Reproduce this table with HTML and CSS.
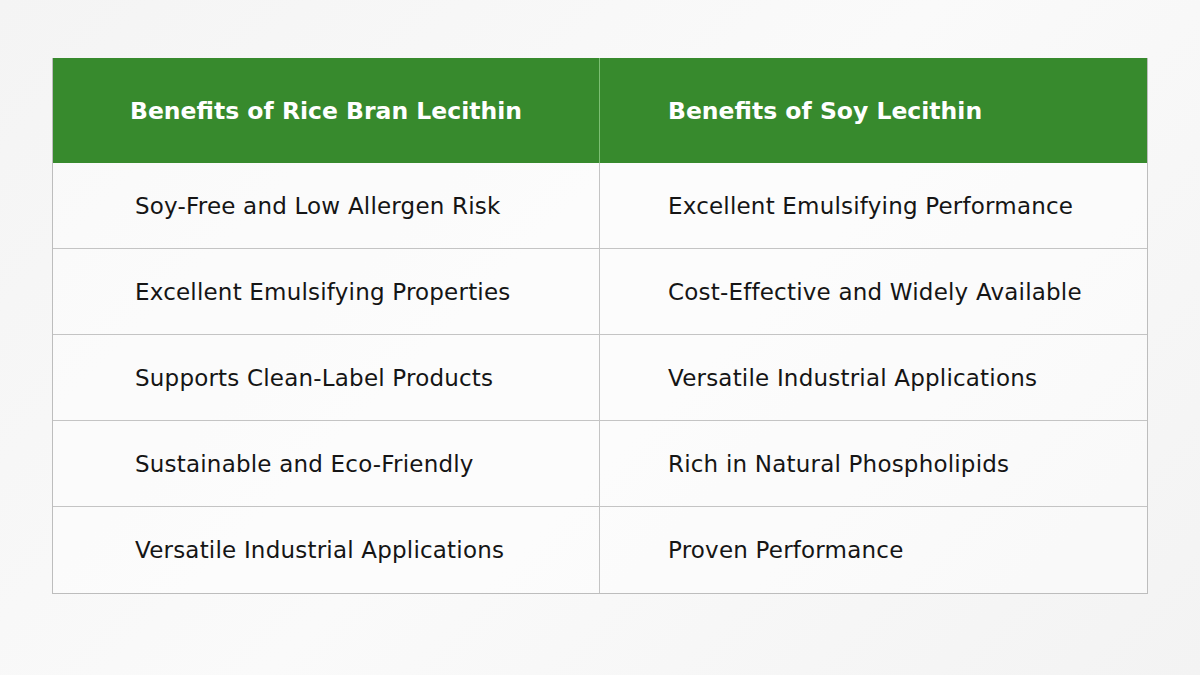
FILE: index.html
```html
<!DOCTYPE html>
<html>
<head>
<meta charset="utf-8">
<link rel="stylesheet" href="styles.css">
</head>
<body>
<div class="page">
  <div class="table">
    <div class="row head">
      <div class="cell c1">Benefits of Rice Bran Lecithin</div>
      <div class="cell c2">Benefits of Soy Lecithin</div>
    </div>
    <div class="row">
      <div class="cell c1">Soy-Free and Low Allergen Risk</div>
      <div class="cell c2">Excellent Emulsifying Performance</div>
    </div>
    <div class="row">
      <div class="cell c1">Excellent Emulsifying Properties</div>
      <div class="cell c2">Cost-Effective and Widely Available</div>
    </div>
    <div class="row">
      <div class="cell c1">Supports Clean-Label Products</div>
      <div class="cell c2">Versatile Industrial Applications</div>
    </div>
    <div class="row">
      <div class="cell c1">Sustainable and Eco-Friendly</div>
      <div class="cell c2">Rich in Natural Phospholipids</div>
    </div>
    <div class="row">
      <div class="cell c1">Versatile Industrial Applications</div>
      <div class="cell c2">Proven Performance</div>
    </div>
  </div>
</div>
</body>
</html>
```
FILE: styles.css
```css
html, body {
  margin: 0;
  padding: 0;
}
body {
  width: 1200px;
  height: 675px;
  overflow: hidden;
  background: linear-gradient(135deg, #f4f4f4 0%, #fafafa 50%, #f3f3f3 100%);
  font-family: "DejaVu Sans", "Liberation Sans", sans-serif;
}
.page {
  padding: 58px 0 0 52px;
}
.table {
  width: 1094px;
  border-left: 1px solid #bdbdbd;
  border-right: 1px solid #bdbdbd;
  border-bottom: 1px solid #bdbdbd;
  background: rgba(255,255,255,0.45);
}
.row {
  display: grid;
  grid-template-columns: 547px 547px;
  height: 86px;
  box-sizing: border-box;
  border-bottom: 1px solid #c4c4c4;
}
.row:last-child {
  border-bottom: none;
}
.row.head {
  height: 105px;
  background: #378a2d;
  border-bottom: none;
  color: #fff;
}
.cell {
  display: flex;
  align-items: center;
  font-size: 23px;
  letter-spacing: 0.2px;
  color: #151515;
  white-space: nowrap;
}
.cell.c1 {
  padding-left: 82px;
  border-right: 1px solid #c4c4c4;
}
.cell.c2 {
  padding-left: 68px;
}
.head .cell {
  color: #fff;
  font-size: 23.5px;
  letter-spacing: 0;
  font-weight: 700;
}
.head .cell.c1 {
  padding-left: 77px;
  border-right: 1px solid #7cbf73;
}
```
